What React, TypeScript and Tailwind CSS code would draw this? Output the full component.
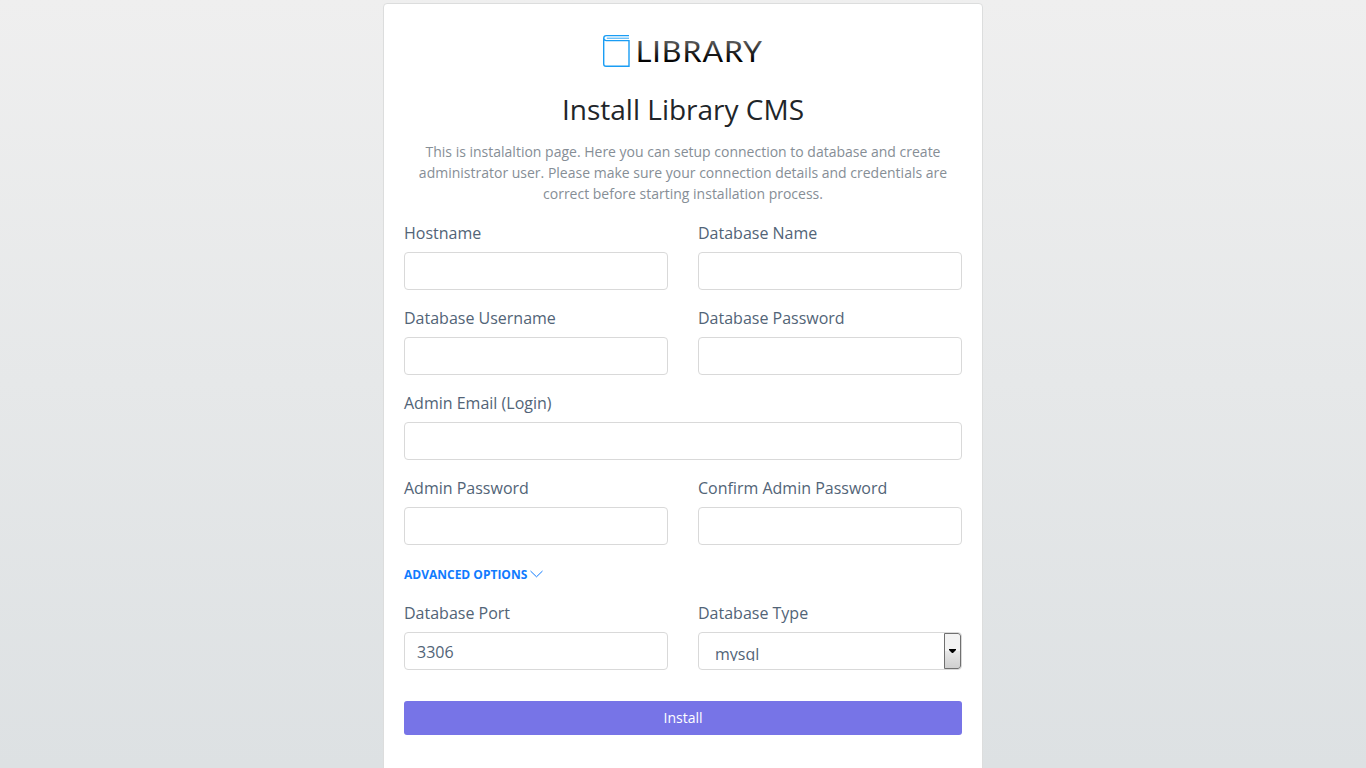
import React from "react";

type FieldProps = { label: string; type?: string; value?: string; wide?: boolean };

function Field({ label, type = "text", value, wide }: FieldProps) {
  return (
    <label className={wide ? "col-span-2 block" : "block"}>
      <span className="mb-[7px] block pt-px leading-6">{label}</span>
      <input
        type={type}
        defaultValue={value}
        className="block h-[38px] w-full rounded border border-[#d9d9d9] bg-white px-3 pt-px text-base outline-none"
      />
    </label>
  );
}

function Logo() {
  return (
    <svg width="160" height="34" viewBox="0 0 160 34" className="block" role="img" aria-label="Library">
      <defs>
        <linearGradient id="ink" x1="0" y1="7" x2="0" y2="28" gradientUnits="userSpaceOnUse">
          <stop offset="0" stopColor="#5c5c5c" />
          <stop offset="0.75" stopColor="#101010" />
          <stop offset="1" stopColor="#000" />
        </linearGradient>
      </defs>
      <g fill="none" stroke="#1a9df4" strokeWidth="1.4">
        <path d="M26 1.6H3.3a2.5 2.5 0 0 0 0 5H26V32.2H3a2.3 2.3 0 0 1-2.3-2.3V3.8" />
        <path d="M26 4.2H3.8" strokeWidth="0.9" />
      </g>
      <text
        x="32.8"
        y="28"
        fill="url(#ink)"
        fontFamily="Lato, sans-serif"
        fontSize="28.5"
        letterSpacing="0.9"
        textLength="127.2"
        lengthAdjust="spacingAndGlyphs"
      >
        LIBRARY
      </text>
    </svg>
  );
}

export default function App() {
  return (
    <div className="flex h-screen justify-center overflow-hidden bg-linear-to-b from-[#efefef] to-[#dde1e3] pt-[3px] font-['Open_Sans',sans-serif] text-base text-[#526477]">
      <main className="h-[800px] w-[600px] shrink-0 rounded border border-[#dcdddd] bg-white px-5 pt-[30px]">
        <div className="flex justify-center">
          <Logo />
        </div>
        <h1 className="mt-6 text-center text-[28px] leading-[34px] text-[#212529]">Install Library CMS</h1>
        <p className="mt-[15px] text-center text-sm leading-[21px] text-[#868e96]">
          This is instalaltion page. Here you can setup connection to database and create
          <br />
          administrator user. Please make sure your connection details and credentials are
          <br />
          correct before starting installation process.
        </p>
        <form className="mt-4">
          <div className="grid grid-cols-2 gap-x-[30px] gap-y-[15px]">
            <Field label="Hostname" />
            <Field label="Database Name" />
            <Field label="Database Username" />
            <Field label="Database Password" type="password" />
            <Field label="Admin Email (Login)" wide />
            <Field label="Admin Password" type="password" />
            <Field label="Confirm Admin Password" type="password" />
          </div>
          <button type="button" className="mt-[19px] flex h-5 items-center gap-[3px] text-xs font-bold text-[#107bfe]">
            <span className="pt-0.5">ADVANCED OPTIONS</span>
            <svg width="13" height="8" viewBox="0 0 13 8" fill="none" stroke="currentColor">
              <path d="M.5 1 6.5 6.8 12.5 1" />
            </svg>
          </button>
          <div className="mt-4 grid grid-cols-2 gap-x-[30px]">
            <Field label="Database Port" value="3306" />
            <div>
              <span className="mb-[7px] block pt-px leading-6">Database Type</span>
              <div className="flex h-[38px] overflow-hidden rounded border border-[#d9d9d9] bg-white">
                <div className="mt-[9px] h-[19px] flex-1 overflow-hidden pl-4 leading-6">mysql</div>
                <div className="flex w-[17px] items-center justify-center rounded-r-[3px] border border-[#707070] bg-linear-to-b from-[#f3f3f3] from-50% via-[#e8e8e8] via-50% to-[#cfcfcf]">
                  <svg width="7" height="4" viewBox="0 0 7 4">
                    <path d="M0 0h7v1L4 4H3L0 1z" />
                  </svg>
                </div>
              </div>
            </div>
          </div>
          <button type="button" className="mt-[31px] h-[34px] w-full rounded-[3px] bg-[#7774e7] text-sm text-white">
            Install
          </button>
        </form>
      </main>
    </div>
  );
}
